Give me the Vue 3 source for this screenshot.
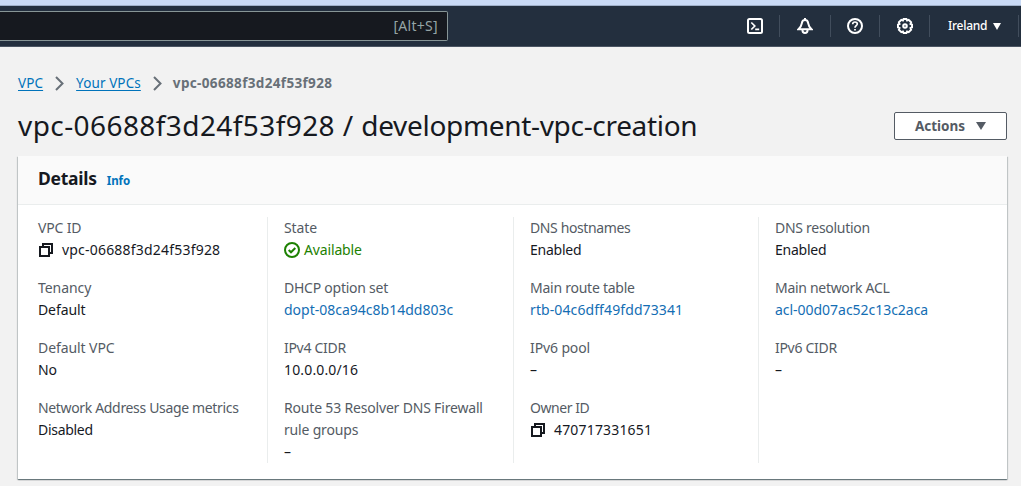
<script setup>
// ls / vs: letter spacing of the label and of the value, in px
const columns = [
  [
    { label: 'VPC ID', value: 'vpc-06688f3d24f53f928', kind: 'copy', ls: -0.15, vs: 0.2 },
    { label: 'Tenancy', value: 'Default', ls: -0.05, vs: -0.1 },
    { label: 'Default VPC', value: 'No', ls: -0.08, vs: -0.2 },
    { label: 'Network Address Usage metrics', value: 'Disabled', ls: -0.34, vs: -0.3 }
  ],
  [
    { label: 'State', value: 'Available', kind: 'status', ls: -0.1, vs: -0.15 },
    { label: 'DHCP option set', value: 'dopt-08ca94c8b14dd803c', kind: 'link', ls: -0.25, vs: 0 },
    { label: 'IPv4 CIDR', value: '10.0.0.0/16', ls: -0.3, vs: 0.15 },
    { label: 'Route 53 Resolver DNS Firewall rule groups', value: '–', ls: -0.18, vs: 0 }
  ],
  [
    { label: 'DNS hostnames', value: 'Enabled', ls: -0.38, vs: -0.25 },
    { label: 'Main route table', value: 'rtb-04c6dff49fdd73341', kind: 'link', ls: -0.25, vs: 0.1 },
    { label: 'IPv6 pool', value: '–', ls: -0.12, vs: 0 },
    { label: 'Owner ID', value: '470717331651', kind: 'copy', ls: -0.45, vs: 0.17 }
  ],
  [
    { label: 'DNS resolution', value: 'Enabled', ls: -0.28, vs: -0.25 },
    { label: 'Main network ACL', value: 'acl-00d07ac52c13c2aca', kind: 'link', ls: -0.3, vs: -0.03 },
    { label: 'IPv6 CIDR', value: '–', ls: -0.3, vs: 0 }
  ]
]
</script>

<template>
  <div class="page">
    <div class="strip"></div>
    <header class="nav">
      <div class="search"><span>[Alt+S]</span></div>
      <nav class="tools">
        <div class="tool t1">
          <svg viewBox="0 0 16 16"><rect x="1" y="1" width="14" height="14" rx="1.5" /><path class="thin" d="M4.300 4.500l3.500 3.500-3.500 3.500M8.200 11.300h4" /></svg>
        </div>
        <div class="tool t2">
          <svg viewBox="0 0 16 16"><path d="M8 2C6 2 5 3.400 4.800 5.400C4.500 7.800 3.500 9.300 1.500 11.200H14.500C12.500 9.300 11.500 7.800 11.200 5.400C11 3.400 10 2 8 2ZM8 0v2M5.500 12v.6c0 3.200 5 3.200 5 0V12" /></svg>
        </div>
        <div class="tool t3">
          <svg viewBox="0 0 16 16"><circle cx="8" cy="8" r="7" /><path class="thin" d="M5.700 6.300C5.700 3.200 10.400 3.400 10.300 6C10.200 7.600 8 7.700 8 9.700M8 10.900v1.700" /></svg>
        </div>
        <div class="tool t4">
          <svg viewBox="0 0 16 16"><path d="M6.600 1h2.800l.7 1.500 1.600-.6 2.400 2.400-.6 1.600 1.500.7v2.800l-1.500.7.6 1.600-2.400 2.400-1.600-.6-.7 1.500H6.600l-.7-1.500-1.600.6-2.400-2.400.6-1.600L1 9.400V6.600l1.500-.7-.6-1.600 2.400-2.400 1.600.6z" /><circle cx="8" cy="8" r="1.800" /></svg>
        </div>
        <div class="region"><span>Ireland</span><svg viewBox="0 0 8 7"><path d="M0 0h8L4 7z" /></svg></div>
      </nav>
    </header>

    <main>
      <div class="crumbs">
        <a>VPC</a>
        <svg viewBox="0 0 9 15"><path d="M1 1l6.500 6.500L1 14" /></svg>
        <a>Your VPCs</a>
        <svg viewBox="0 0 9 15"><path d="M1 1l6.500 6.500L1 14" /></svg>
        <b>vpc-06688f3d24f53f928</b>
      </div>
      <div class="heading">
        <h1><span class="vpc-id">vpc-06688f3d24f53f928 / </span><span class="vpc-name">development-vpc-creation</span></h1>
        <button><span>Actions</span><svg viewBox="0 0 10 8"><path d="M0 0h10L5 8z" /></svg></button>
      </div>
      <section class="card">
        <div class="card-head"><h2>Details</h2><a>Info</a></div>
        <div class="grid">
          <div v-for="(col, i) in columns" :key="i" class="col">
            <div v-for="f in col" :key="f.label" class="field">
              <div class="label" :style="{ letterSpacing: f.ls + 'px' }">{{ f.label }}</div>
              <div class="value" :class="f.kind">
                <svg v-if="f.kind === 'copy'" class="copy-icon" viewBox="0 0 14 14"><path d="M1 4h9v9H1zM4 4V1h9v9h-3" /></svg>
                <svg v-if="f.kind === 'status'" class="ok-icon" viewBox="0 0 16 16"><circle cx="8" cy="8" r="7" /><path d="M4.700 8l2.300 2.300 4.300-4.300" /></svg>
                <span :style="{ letterSpacing: f.vs + 'px' }">{{ f.value }}</span>
              </div>
            </div>
          </div>
        </div>
      </section>
    </main>
  </div>
</template>

<style>
body { background: #f2f2f2; overflow: hidden; }
</style>

<style scoped>
* { box-sizing: border-box; }
.page { height: 486px; overflow: hidden; background: #f2f2f2; font: 14px/22px "Noto Sans", sans-serif; color: #16191f; }
.strip { height: 6px; background: #c9daf5; border-bottom: 1px solid #9fb0c9; }
svg { display: block; flex: none; fill: none; stroke: currentColor; stroke-width: 2; }
.thin { stroke-width: 1.700; }
.nav { height: 41px; display: flex; justify-content: space-between; align-items: flex-start; background: #232f3e; border-bottom: 1px solid #4b5563; padding-top: 5px; }
.search { width: 448px; height: 30px; border: 1px solid #879596; border-left: 0; border-radius: 0 2px 2px 0; background: #16191f; color: #95a5a6; display: flex; align-items: center; justify-content: flex-end; padding-right: 9px; letter-spacing: .3px; }
.tools { display: flex; height: 22px; margin-top: 4px; color: #fff; padding-right: 2px; }
.tool { display: flex; align-items: center; border-right: 1px solid #414d5c; }
.tool svg { width: 16px; height: 16px; }
.t1 { width: 33px; }
.t2 { width: 51px; padding-left: 17px; }
.t3 { width: 49px; padding-left: 16px; }
.t4 { width: 50px; padding-left: 17px; }
.region { width: 89px; display: flex; align-items: center; padding-left: 18px; border-right: 1px solid #414d5c; font-size: 12px; font-weight: 500; letter-spacing: -.25px; }
.region svg { width: 8px; height: 7px; margin-left: 6px; fill: #fff; stroke: none; }
main { padding: 25px 14px 0 18px; }
.crumbs { display: flex; align-items: center; height: 22px; color: #687078; font-size: 13.500px; }
.crumbs a { color: #0073bb; text-decoration: underline; text-underline-offset: 2px; letter-spacing: .1px; }
.crumbs svg { width: 9px; height: 15px; margin: 0 12px; }
.crumbs b { font-size: 13.500px; letter-spacing: .35px; margin-left: -1px; }
.heading { display: flex; justify-content: space-between; align-items: center; height: 36px; margin-top: 14px; }
h1 { margin: -3px 0 0; font-size: 28px; line-height: 36px; font-weight: 400; white-space: pre; }
.vpc-id { letter-spacing: .42px; }
.vpc-name { letter-spacing: -.32px; }
button { width: 113px; height: 28px; padding: 0; background: #fff; border: 1px solid #545b64; border-radius: 2px; color: #545b64; font: 700 13.500px/22px "Noto Sans", sans-serif; display: flex; align-items: center; justify-content: center; gap: 11px; }
button svg { width: 10px; height: 8px; fill: currentColor; stroke: none; }
.card { margin-top: 12px; height: 323px; background: #fff; box-shadow: 0 1px 1px rgba(0, 28, 36, .4), 1px 1px 1px rgba(0, 28, 36, .15), -1px 1px 1px rgba(0, 28, 36, .15); }
.card-head { height: 49px; background: #fafafa; border-bottom: 1px solid #eaeded; display: flex; align-items: baseline; padding: 11px 20px 0; gap: 10px; }
h2 { margin: 0; font-size: 17.500px; line-height: 22px; font-weight: 700; letter-spacing: -.25px; }
.card-head a { font-size: 11.500px; font-weight: 700; color: #0073bb; letter-spacing: -.1px; }
.grid { display: grid; grid-template-columns: 250px 246px 245px 1fr; padding-top: 12px; height: 258px; }
.col { border-right: 1px solid #eaeded; padding-left: 16px; display: flex; flex-direction: column; gap: 16px; }
.col:first-child { padding-left: 20px; }
.col:last-child { border: 0; }
.label { color: #545b64; width: 215px; }
.value { display: flex; align-items: center; }
.value.link { color: #146eb4; }
.value.status { color: #1d8102; }
.copy-icon { width: 14px; height: 14px; margin: 0 9px 0 1px; }
.ok-icon { width: 16px; height: 16px; margin-right: 4px; }
</style>
